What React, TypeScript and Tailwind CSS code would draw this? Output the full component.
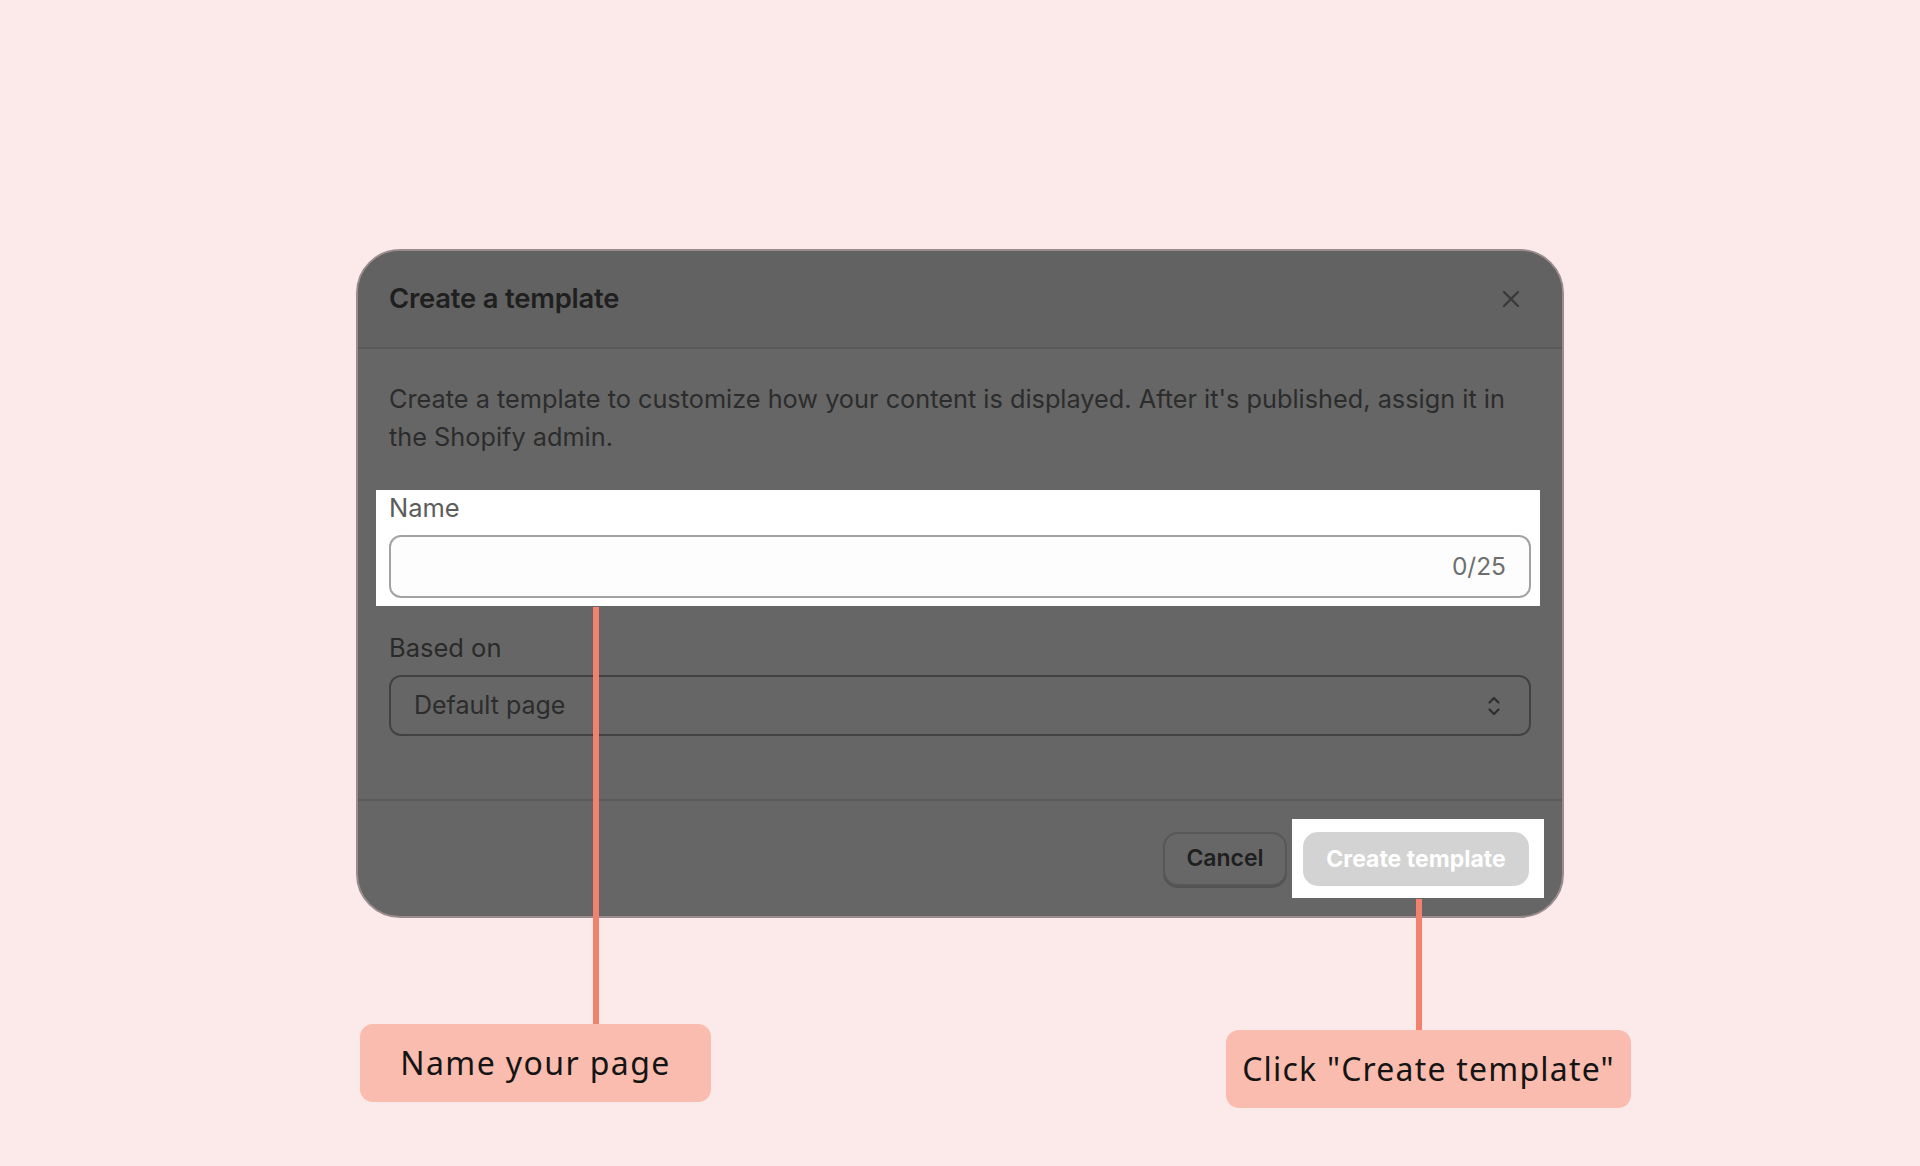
import React from "react";

function CloseIcon() {
  return (
    <svg width="18" height="18" viewBox="0 0 18 18" fill="none">
      <path d="M2 2 L16 16 M16 2 L2 16" stroke="#3a3a3a" strokeWidth="2.4" strokeLinecap="round" />
    </svg>
  );
}

function SelectIcon() {
  return (
    <svg width="14" height="22" viewBox="0 0 14 22" fill="none">
      <path d="M2.5 7.5 L7 3 L11.5 7.5" stroke="#2e2e2e" strokeWidth="2.2" strokeLinecap="round" strokeLinejoin="round" />
      <path d="M2.5 14.5 L7 19 L11.5 14.5" stroke="#2e2e2e" strokeWidth="2.2" strokeLinecap="round" strokeLinejoin="round" />
    </svg>
  );
}

export default function App() {
  const dlgFont = { fontFamily: "Inter, 'Liberation Sans', sans-serif" };
  const noteFont = { fontFamily: "'Noto Sans', 'DejaVu Sans', sans-serif" };
  return (
    <div className="relative w-[1920px] h-[1166px] bg-[#fce9e9] overflow-hidden">
      <div className="flex flex-col pt-[249px]">
        {/* Modal */}
        <div
          className="ml-[356px] w-[1208px] h-[669px] rounded-[44px] border-2 border-[#9a8c8d] bg-[#666666] overflow-hidden flex flex-col"
          style={dlgFont}
        >
          {/* Header */}
          <div className="h-[98px] shrink-0 bg-[#626262] border-b-2 border-[#585858] flex items-center justify-between pl-[31px] pr-[42px]">
            <div className="text-[27.4px] font-semibold text-[#1f1f1f] tracking-[-0.2px]">Create a template</div>
            <CloseIcon />
          </div>
          {/* Body */}
          <div className="flex-1 flex flex-col pt-[31px] pl-[18px] pr-[22px]">
            <p className="pl-[13px] pr-[20px] text-[25.3px] leading-[38px] text-[#2c2c2c]">
              Create a template to customize how your content is displayed. After it's published, assign it in the Shopify admin.
            </p>
            <div className="mt-[34px] bg-white pt-[3px] pb-[8px] pl-[13px] pr-[9px]">
              <div className="text-[25.5px] leading-[30px] text-[#5c5c5c]">Name</div>
              <div className="mt-[12px] h-[63px] rounded-[12px] border-2 border-[#a3a3a3] bg-[#fdfdfd] flex items-center justify-end pr-[23px]">
                <span className="text-[24.5px] text-[#6e6e6e]">0/25</span>
              </div>
            </div>
            <div className="pl-[13px] pr-[9px]">
              <div className="mt-[27px] text-[25.5px] leading-[30px] text-[#2a2a2a]">Based on</div>
              <div className="mt-[12px] h-[61px] rounded-[12px] border-2 border-[#424242] flex items-center justify-between pl-[23px] pr-[28px]">
                <span className="text-[25px] text-[#2c2c2c]">Default page</span>
                <SelectIcon />
              </div>
            </div>
          </div>
          {/* Footer */}
          <div className="h-[117px] shrink-0 border-t-2 border-[#5a5a5a] flex items-center justify-end pr-[18px]">
            <div className="w-[124px] h-[54px] rounded-[15px] border-2 border-[#575757] bg-[#676767] shadow-[0_2px_0_#525252] flex items-center justify-center text-[23px] font-semibold text-[#1f1f1f]">
              Cancel
            </div>
            <div className="ml-[5px] bg-white pl-[11px] pr-[15px] pt-[13px] pb-[12px]">
              <div className="w-[226px] h-[54px] rounded-[15px] bg-[#d3d3d3] flex items-center justify-center text-[23px] font-bold text-white">
                Create template
              </div>
            </div>
          </div>
        </div>
        {/* Callouts */}
        <div className="flex items-start" style={noteFont}>
          <div className="ml-[360px] mt-[106px] w-[351px] h-[78px] rounded-[13px] bg-[#f9bcae] flex items-center justify-center text-[32px] text-[#141414] tracking-[1.4px]">
            Name your page
          </div>
          <div className="ml-[515px] mt-[112px] w-[405px] h-[78px] rounded-[13px] bg-[#f9bcae] flex items-center justify-center text-[32px] text-[#141414] tracking-[1.2px]">
            Click "Create template"
          </div>
        </div>
      </div>
      {/* Connector lines */}
      <div className="absolute left-[593px] top-[607px] w-[6px] h-[417px] bg-[#f2826e]" />
      <div className="absolute left-[1416px] top-[899px] w-[6px] h-[131px] bg-[#f2826e]" />
    </div>
  );
}
